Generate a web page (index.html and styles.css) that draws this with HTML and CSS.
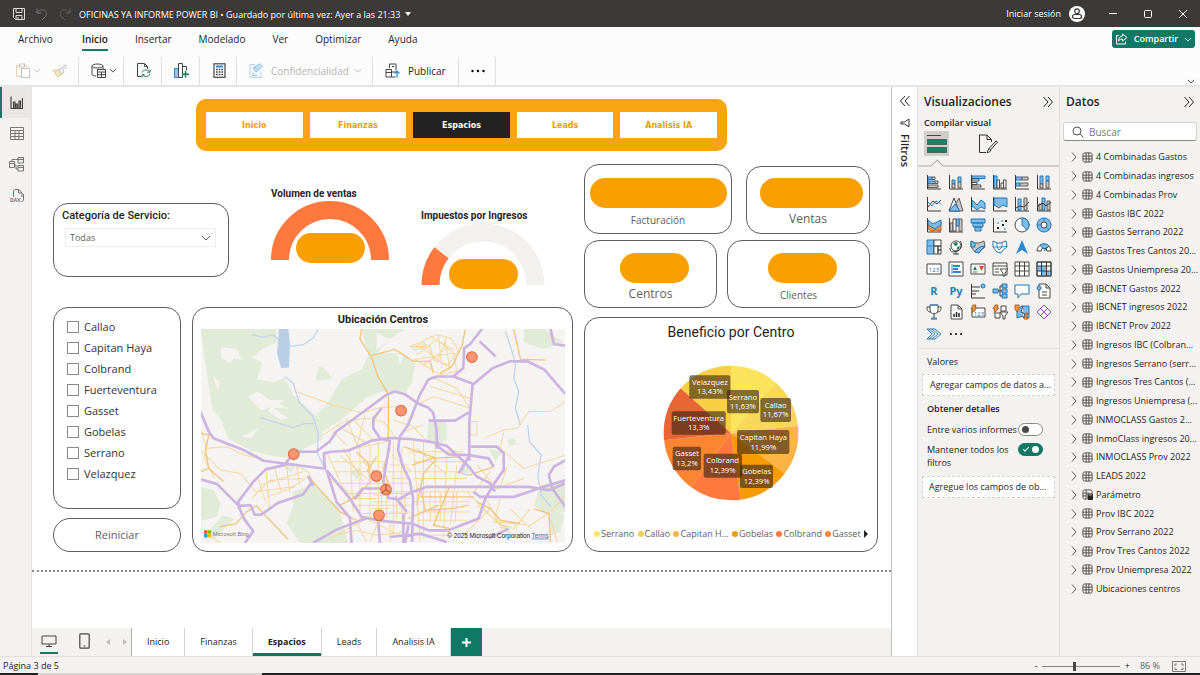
FILE: index.html
```html
<!DOCTYPE html>
<html lang="es">
<head>
<meta charset="utf-8">
<meta name="viewport" content="width=device-width, initial-scale=1">
<title>OFICINAS YA INFORME POWER BI</title>
<link rel="stylesheet" href="styles.css">
</head>
<body>
<svg class="defs" aria-hidden="true">
  <symbol id="chev-down" viewBox="0 0 10 6"><path d="M1 1l4 4 4-4" fill="none" stroke="currentColor"/></symbol>
  <symbol id="chev-right" viewBox="0 0 6 10"><path d="M1 0.5l4 4.500-4 4.500" fill="none" stroke="currentColor"/></symbol>
  <symbol id="dbl-right" viewBox="0 0 12 12"><path d="M1.500 1l4.500 5-4.500 5M6 1l4.500 5L6 11" fill="none" stroke="currentColor"/></symbol>
  <symbol id="dbl-left" viewBox="0 0 12 12"><path d="M6 1L1.500 6 6 11M10.500 1L6 6l4.500 5" fill="none" stroke="currentColor"/></symbol>
  <symbol id="table" viewBox="0 0 12 12"><rect x="1" y="1" width="10" height="10" rx="2" fill="none" stroke="currentColor"/><path d="M1 4.500h10M1 7.500h10M4.500 1v10M7.500 1v10" stroke="currentColor" fill="none"/></symbol>
  <symbol id="table-param" viewBox="0 0 12 12"><path d="M11 5V3a2 2 0 0 0-2-2H3a2 2 0 0 0-2 2v6a2 2 0 0 0 2 2h2M1 4.500h7M1 7.500h4M4.500 1v10" fill="none" stroke="currentColor"/><rect x="6" y="5" width="6" height="7" rx="1" fill="#252423"/><path d="M7 6.500h4" stroke="#fff" stroke-width=".7"/></symbol>
</svg>

<header class="titlebar">
  <button class="tb-btn" aria-label="Guardar"><svg width="14" height="14" viewBox="0 0 14 14"><path d="M1.500 1.500h11v11h-9l-2-2zM4 1.500v4h6v-4M4 12.500v-4h6v4M6 10v2.500" fill="none" stroke="#ddd"/></svg></button>
  <button class="tb-btn" aria-label="Deshacer"><svg width="14" height="14" viewBox="0 0 14 14"><path d="M2 1.500v4.500h4.500M2 6c2-3 5-4 7.500-2.500s2.500 4.500.5 6.500L7 13" fill="none" stroke="#77757a"/></svg></button>
  <button class="tb-btn" aria-label="Rehacer"><svg width="14" height="14" viewBox="0 0 14 14"><path d="M12 1.500v4.500H7.500M12 6C10 3 7 2 4.500 3.500S2 8 4 10l3 3" fill="none" stroke="#65635f"/></svg></button>
  <h1 class="doc-title">OFICINAS YA INFORME POWER BI • Guardado por última vez: Ayer a las 21:33</h1>
  <svg class="caret" width="6" height="4" viewBox="0 0 6 4"><path d="M0 0h6L3 4z" fill="#fff"/></svg>
  <span class="spacer"></span>
  <button class="signin">Iniciar sesión
    <svg width="16" height="16" viewBox="0 0 16 16"><circle cx="8" cy="8" r="8" fill="#fff"/><circle cx="8" cy="5.200" r="2.300" fill="none" stroke="#333" stroke-width="1.200"/><rect x="3.500" y="8.500" width="9" height="4" rx="2" fill="none" stroke="#333" stroke-width="1.200"/></svg></button>
  <button class="win" aria-label="Minimizar"><svg width="10" height="10" viewBox="0 0 10 10"><path d="M1 4.500h8" stroke="#fff"/></svg></button>
  <button class="win" aria-label="Maximizar"><svg width="10" height="10" viewBox="0 0 10 10"><rect x="1.500" y="1.500" width="7" height="7" rx="1" fill="none" stroke="#fff"/></svg></button>
  <button class="win" aria-label="Cerrar"><svg width="10" height="10" viewBox="0 0 10 10"><path d="M1 1l8 8M9 1L1 9" stroke="#fff"/></svg></button>
</header>

<section class="ribbon">
  <nav class="ribbon-tabs">
    <a href="#">Archivo</a><a href="#" class="active">Inicio</a><a href="#">Insertar</a><a href="#">Modelado</a><a href="#">Ver</a><a href="#">Optimizar</a><a href="#">Ayuda</a>
    <button class="share"><svg width="13" height="12" viewBox="0 0 13 12"><path d="M4 2.500H1.500v8.500h9V8.500" fill="none" stroke="#fff"/><path d="M7.500 1l4.500 3.500-4.500 3.500V6C5.500 6 4.500 6.500 3.500 8 3.800 5 5 3.200 7.500 3z" fill="none" stroke="#fff"/></svg>Compartir<svg width="8" height="5"><use href="#chev-down"/></svg></button>
  </nav>
  <div class="tools">
    <div class="tool-group first">
      <button aria-label="Pegar" class="tool off"><svg width="15" height="15" viewBox="0 0 15 15"><path d="M5 2.500H1.500v11H6M10 2.500h2V5" fill="none" stroke="#e6d3a3"/><rect x="4.500" y="1" width="5" height="3" fill="none" stroke="#c5c3c0"/><rect x="6.500" y="5.500" width="8" height="9" fill="#fff" stroke="#c5c3c0"/></svg><svg width="8" height="5"><use href="#chev-down"/></svg></button>
      <button aria-label="Copiar formato" class="tool off"><svg width="15" height="14" viewBox="0 0 15 14"><path d="M1 6l5 7 4-3-3-5-2 1.500z" fill="#f3e5bd" stroke="#dbc68e"/><path d="M6.500 5.500l3.500 4.500 2-2-1.500-2 4-3.500-1.200-1.500-4 3.500z" fill="#f8f8f8" stroke="#c0beba"/></svg></button>
    </div>
    <div class="tool-group menu"><button aria-label="Obtener datos" class="tool"><svg width="15" height="15" viewBox="0 0 15 15"><ellipse cx="6.500" cy="3" rx="5.500" ry="2" fill="none" stroke="#444"/><path d="M1 3v8c0 1.300 1.500 2 4 2M12 3v3" fill="none" stroke="#444"/><path d="M6.500 6.500h8v8h-8zM6.500 9h8M6.500 11.700h8M10.500 9v5.500" fill="#fff" stroke="#444"/></svg><svg width="8" height="5"><use href="#chev-down"/></svg></button></div>
    <div class="tool-group"><button aria-label="Actualizar" class="tool"><svg width="15" height="15" viewBox="0 0 15 15"><path d="M5 13.500H1.500V.5h7l3 3V6M8.500.5v3h3" fill="none" stroke="#444"/><path d="M6 9.500c1-3 5.500-3.500 7.500-.8M14 6.500v2.700h-2.700M14 11c-1 3-5.500 3.300-7.500.8M6 14.500v-2.700h2.700" fill="none" stroke="#15795f"/></svg></button></div>
    <div class="tool-group"><button aria-label="Nuevo objeto visual" class="tool"><svg width="15" height="15" viewBox="0 0 15 15"><path d="M.5 5.500h4v9h-4z" fill="#8ec6f2" stroke="#2b88c9"/><path d="M4.500.5h4v14h-4zM8.500 3.500h4v4" fill="#fff" stroke="#444"/><path d="M11.500 8v6.500M8 11.200h7" stroke="#15795f" stroke-width="1.400"/></svg></button></div>
    <div class="tool-group"><button aria-label="Nueva medida" class="tool"><svg width="13" height="15" viewBox="0 0 13 15"><rect x="1" y=".8" width="11" height="13.500" fill="#fff" stroke="#444" stroke-width="1.200"/><path d="M3 3.500h7" stroke="#2b88c9" stroke-width="2"/><path d="M3 6.500h7M3 9h7M3 11.500h7" stroke="#444" stroke-width="1.500" stroke-dasharray="1.700 1"/></svg></button></div>
    <div class="tool-group"><button class="tool off"><svg width="14" height="15" viewBox="0 0 14 15"><path d="M6 1.500H1v13h11V9" fill="#f4f9fd" stroke="#b9d3e6"/><path d="M4 5l7-4.500 2.500 3-6.500 5.500zM3 12.500h5M3 10.500h2" fill="#cfe6f7" stroke="#8fc0e4"/><path d="M6 4l2.500 3M8 2.500l2.500 3" stroke="#8fc0e4"/></svg><span>Confidencialidad</span><svg width="8" height="5"><use href="#chev-down"/></svg></button></div>
    <div class="tool-group"><button class="tool"><svg width="15" height="15" viewBox="0 0 15 15"><path d="M4.500 5V1h6.500v6.500M6.500 9v5H1V6.500h5.500V9h4" fill="none" stroke="#444"/><path d="M1 9.500h5M7 3.500h2M6.500 14h4" stroke="#444"/><path d="M12 14.500V8M9.500 10.500L12 8l2.500 2.500" fill="none" stroke="#2b88c9" stroke-width="1.200"/></svg><span>Publicar</span></button></div>
    <div class="tool-group"><button aria-label="Más opciones" class="tool"><svg width="14" height="4" viewBox="0 0 14 4"><circle cx="1.500" cy="2" r="1.200"/><circle cx="7" cy="2" r="1.200"/><circle cx="12.500" cy="2" r="1.200"/></svg></button></div>
    <button class="collapse" aria-label="Contraer cinta"><svg width="8" height="5"><use href="#chev-down"/></svg></button>
  </div>
</section>

<main class="workspace">
  <nav class="views">
    <button class="view active" aria-label="Vista de informe"><svg width="13" height="13" viewBox="0 0 13 13"><path d="M1 .5v12h11.500V2M3.500 12V6h1.500v6M6 12V8h1.500v4M9 12V5h1.500v7" fill="none" stroke="#444" stroke-width="1.200"/></svg></button>
    <button class="view" aria-label="Vista de tabla"><svg width="14" height="13" viewBox="0 0 14 13"><path d="M.5.5h13v12H.5zM.5 3.500h13M.5 6.500h13M.5 9.500h13M5 3v9.500M9 3v9.500" fill="none" stroke="#777"/></svg></button>
    <button class="view" aria-label="Vista de modelo"><svg width="15" height="15" viewBox="0 0 15 15"><path d="M.5 4.500h5v6h-5zM.5 6.500h5M9 .5h5.500v5.500H9zM9 2.500h5.500M9 8.500h5.500V14H9zM9 10.500h5.500M3 4.500V2.500h6M5.500 8H7v4h2" fill="none" stroke="#777"/></svg></button>
    <button class="view" aria-label="Vista de consultas DAX"><svg width="14" height="14" viewBox="0 0 14 14"><path d="M3.500 8V3c0-1.500 1-2.500 2.500-2.500h3L12 4v4M8.500.5V4H12M13.500 5v6c0 1-1 1.500-2 1.500" fill="none" stroke="#777"/><text x="0" y="13" class="dax-text">DAX</text></svg></button>
  </nav>

  <section class="report">
    <div class="page">
      <nav class="page-nav"><a href="#">Inicio</a><a href="#">Finanzas</a><a href="#" class="active">Espacios</a><a href="#">Leads</a><a href="#">Analisis IA</a></nav>
      <div class="board">
        <div class="left">
          <div class="upper">
            <div class="card category">
              <label for="cat">Categoría de Servicio:</label>
              <div class="select-wrap"><select id="cat"><option>Todas</option></select><svg width="10" height="6"><use href="#chev-down"/></svg></div>
            </div>
            <figure class="gauge one"><figcaption>Volumen de ventas</figcaption>
              <svg width="118" height="63" viewBox="0 0 118 63"><path d="M9 59a50 50 0 0 1 100 0" fill="none" stroke="#ff793f" stroke-width="18"/><rect x="25" y="32" width="69" height="30" rx="15" fill="#fa9f00"/></svg></figure>
            <figure class="gauge two"><figcaption>Impuestos por Ingresos</figcaption>
              <svg width="124" height="67" viewBox="0 0 124 67"><path d="M9.500 62a52.500 52.500 0 0 1 105 0" fill="none" stroke="#f2f1f0" stroke-width="18"/><path d="M9.500 62a52.500 52.500 0 0 1 105 0" fill="none" stroke="#ff793f" stroke-width="18" pathLength="100" stroke-dasharray="21 100"/><rect x="28" y="36" width="69" height="30" rx="15" fill="#fa9f00"/></svg></figure>
          </div>
          <div class="lower">
            <div class="slicer-col">
              <fieldset class="card slicer">
                <div class="options">
                <label><input type="checkbox">Callao</label><label><input type="checkbox">Capitan Haya</label><label><input type="checkbox">Colbrand</label><label><input type="checkbox">Fuerteventura</label><label><input type="checkbox">Gasset</label><label><input type="checkbox">Gobelas</label><label><input type="checkbox">Serrano</label><label><input type="checkbox">Velazquez</label>
                </div>
              </fieldset>
              <button class="card reset">Reiniciar</button>
            </div>
            <div class="card map-card">
              <h2>Ubicación Centros</h2>
              <svg class="map" viewBox="33 73 1092 640" preserveAspectRatio="xMidYMid slice">
                <rect x="33" y="73" width="1092" height="640" fill="#f6f4f2"/>
                <g fill="#e2ebd8">
                  <path d="M33 73h225l5 40-45 20-30 25 30 15-15 50 50 10 30-15 30 55 45 40 40 40 0 50-60 30-20 28-70-8-60-15-70-35-25-60-25-30z"/>
                  <path d="M515 73h130l-45 30-40 42 70 0 45 30-10 60-20 30-65-5-50 18-80 70-50 30-25-40 40-45 40-70 60-30 20-40z"/>
                  <path d="M310 560l60-22 75 65 30 110H330l-40-60 20-50z"/><path d="M33 545l40 10 20 40-10 40-50 10zM715 350h55v55l-25 12-35-10z"/>
                  <path d="M1050 540l75-20v100l-50 10-45-30zM1075 625h45l-10 55-30 10z"/><path d="M275 480l50-8-20 30zM950 405l22-5 5 18-20 6zM480 500l30-15 10 25-20 12zM810 500l35-20-10 25zM385 185l18 5 25 30-20 5-30 2zM660 130l40-20 15 15-40 15zM895 430l40 10-20 30zM100 630l35 10-60 60H40zM1000 73h60l60 40-60 20-60-20z"/>
                </g>
                <g fill="#f6f4f2"><path d="M95 125l50 10 10 30-20-5-15 15-25-15zM175 275l30-15 35 25 45 0-15 12 30 15-60-5-25 10zM70 215l20 15-5 25zM205 370l-20 30-30-5zM245 305l50 35-20 5-40-25z"/><path d="M560 85l40 20-40 30zM620 145l20 10-10 25z"/></g>
                <g fill="none" stroke="#c3d4ea" stroke-width="4"><path d="M187 90l35 8 25-8 30 20M385 75l-15 25-30 20-40 5M285 215l25 20 20 60 40 40 15 50-2 60 25 50"/><path d="M210 338l40 12 60 18 35-12h30M1012 360l5 50 35 40-10 60 10 60 30 35M945 80l20 60 10 40-5 40 15 40-10 50 15 50M825 480l-10 25 20 5"/></g>
                <path d="M268 73h28l5 45-3 70-24 2-12-45 3-30z" fill="#b9cfe6"/>
                <g fill="none" stroke="#f3d8a2" stroke-width="3">
                  <path d="M325 262l110 40 80 22 50-15 75-5M660 125h60l10 40 45 15 30-45-25-35-40-10zM680 150l60-45 50 40 10 55-50 10-75-45M700 110l40 60M745 90l10 100M770 95l-30 80M670 165l120-20M720 215l80 35 40 60-110-35-40 20M690 125l80 60M720 95l70 40M765 110l15 90M700 180l70-50"/>
                  <path d="M400 390l60-40 70-10 50 10 40 50M470 340l35 90M525 330l-25 100 90-20M580 300l-35 60M610 345l60 20 45 50M650 350l25-20M640 380l60-20M720 245l120 35M860 350v40h-20v-40zM880 400l60-25 40-5 35-50 65 0 45-30M940 380l-10 50 70 60 125-40M430 380l40 40M440 360l100 60M490 345l60 60"/>
                  <path d="M33 370l20 60 60-5 50 25 65 15M33 435l60 60 60 10 50 60M55 400l-10 60 30 60M215 500l95-25 45 25 20 40M205 520l25 75M230 500l5 75 80-30M200 560l110-15 45-30M255 490l20 70M290 480l10 80M185 580l55-55 100-5M240 610l-10-100M320 480l10 60M210 540l130-40"/>
                  <path d="M410 440l60 130 40 50M430 470h160M440 500h220M455 535h200M470 565h180M500 600h160M515 625h140M480 440l10 180M510 430v220M540 420v230M565 410v240M610 410v280M635 430v190M600 560h60M600 580h60M600 600h60M600 620h60M550 570h50M550 590h50M550 610h50M575 560v80M590 560v80M620 560v80M645 560v80M420 520l80 60M460 430l60 100M450 450l80 70M500 580h60M520 470l70 60M605 450l60 50M600 480h55M605 520h50"/>
                  <path d="M670 410l20 300M700 410v290M735 420v220M770 450l-10 250M800 480l-20 180M660 440h160M670 470h150M670 500h150M670 520l160 0M670 560h180M670 590h170M680 620h160M680 645h150M680 430l90 80M720 560v90M750 560v90M800 560l-5 90M830 560l90 90 60 50M860 600l90 70M880 570l60 110M900 610l-80 80M930 580l-20 70 60 20 50-60M860 480l60 70 80-30M900 500l-50 60M960 610l60 60M1080 620l-60 40-100-10M1080 620l45-50M1080 640l20 70M930 545l20-60M33 680l40 20 20 13M440 690l60-15 60 15 80-10M420 700l110-60 120 60M500 650l30 60M560 660l-20 50M600 650v60M670 690h120"/>
                </g>
                <g fill="none" stroke="#f2c47c" stroke-width="4"><path d="M515 73l-5 30 35 55 20 60 30 50v130M545 152l70-18 55 36 50 0 10 35M825 75l-10 50-30 60-35 20M970 73l20 90 75 3"/><path d="M33 385l25 5-10 45 10 55 45 40M33 500l25-10M90 665l50-10 30-35 30-18 95 100M360 520l90 100 50 25M640 425l100 35-40 45-20 95M500 440l35 35 5 55-45 55M665 480l60-20 85-5M690 540l15 75 80-5 50-10M560 455l-30 45M860 590l40 20 30 35 60 10M780 540l-50 120 50 10M1030 610l45 15 5 85M835 510l75-25M690 575h160M450 600l60-30M600 430l-20 60 20 60M655 640l90-40"/></g>
                <g fill="none" stroke="#ccb4e0" stroke-width="8" stroke-linejoin="round">
                  <path d="M33 320l25 60 14 20 90 35 60 32 90 12 95 12M33 522l50 15 65 65 35-2 12 28 20 0 50-35 75-25 25-35M355 512l15 30M148 610l-2-20 45-60 38-38 55-12 30-40h65l40-30 20-30 55-40 95-70 25-10 30 8 40 28 30 12 15 15 10 50 2 58"/>
                  <path d="M148 605l15 35 28 38-25 35M405 490l-3-45 22-5 50-3 70-30 55-8 60 3 60 8 50 12 60 55 30 37 40 20 15 25M410 495l30 95 40 48 5 75M410 495l70 85 35 55 60 12 90 8 50 20 60 0 90-35 20-60 30-50 25-35v-50l-20-20-80 0M735 418l40 30 60 2 60 10 15 25M835 455l-30 50"/>
                  <path d="M875 73l-35 45-18 12-3 60-30 25-50 0-25 10-25 45-35 90-25 35-5 40 15 50 20 40 10 55-3 130M790 215l57 22-10 115v115M847 240l60-50 50-20h55l50 25 65 75M868 110l48 45M715 347h80l40-25M575 310l-25 30 0 30 20 30 30 8-20 120 15 50 30 5 35-20 50-18 120 0 185 0 60 10 60-25M650 620l-35-45M640 625v88M593 550h-75l-25 30M565 650l5 63M370 713l70-40 90-35M850 560l20 15 100 0 90-30 65-20M1080 73l10 45 35 5M1125 465l-35 20-15 25 10 40 40 55M600 695l90-10 80 25M655 660l-10 53M895 700l60-30"/>
                </g>
                <g fill="#fb9470" stroke="#d9683f" stroke-width="3"><circle cx="845" cy="157" r="16"/><circle cx="633" cy="317" r="16"/><circle cx="312" cy="447" r="16"/><circle cx="559" cy="513" r="16"/><circle cx="588" cy="553" r="16"/><circle cx="567" cy="630" r="16"/></g>
                <path d="M588 537v17l-13 9M588 554l13 9" fill="none" stroke="#a34a22" stroke-width="3"/>
                <path d="M44 675h10v10H44z" fill="#f25022"/><path d="M55 675h10v10H55z" fill="#7fba00"/><path d="M44 686h10v10H44z" fill="#00a4ef"/><path d="M55 686h10v10H55z" fill="#ffb900"/>
                <text x="70" y="692" class="map-text bing">Microsoft Bing</text>
                <text x="771" y="697" class="map-text">© 2025 Microsoft Corporation</text>
                <text x="1023" y="697" class="map-text terms">Terms</text>
              </svg>
            </div>
          </div>
        </div>
        <div class="right">
          <div class="kpis"><div class="card kpi fact"><span class="pill"></span><span>Facturación</span></div><div class="card kpi vent"><span class="pill"></span><span>Ventas</span></div></div>
          <div class="kpis second"><div class="card kpi cent"><span class="pill"></span><span>Centros</span></div><div class="card kpi clie"><span class="pill"></span><span>Clientes</span></div></div>
          <div class="card pie-card">
            <h2>Beneficio por Centro</h2>
            <svg class="pie" viewBox="0 0 408 408">
              <g class="slices" transform="rotate(-90 204 204)">
                <circle cx="204" cy="204" r="101" pathLength="100" stroke="#fbe45b" stroke-dasharray="11.700 100"/>
                <circle cx="204" cy="204" r="101" pathLength="100" stroke="#f8d75c" stroke-dasharray="11.700 100" stroke-dashoffset="-11.630"/>
                <circle cx="204" cy="204" r="101" pathLength="100" stroke="#fcb445" stroke-dasharray="12 100" stroke-dashoffset="-23.300"/>
                <circle cx="204" cy="204" r="101" pathLength="100" stroke="#f79b04" stroke-dasharray="12.400 100" stroke-dashoffset="-35.290"/>
                <circle cx="204" cy="204" r="101" pathLength="100" stroke="#ff793f" stroke-dasharray="12.400 100" stroke-dashoffset="-47.680"/>
                <circle cx="204" cy="204" r="101" pathLength="100" stroke="#fc8532" stroke-dasharray="13.200 100" stroke-dashoffset="-60.070"/>
                <circle cx="204" cy="204" r="101" pathLength="100" stroke="#e96536" stroke-dasharray="13.300 100" stroke-dashoffset="-73.270"/>
                <circle cx="204" cy="204" r="101" pathLength="100" stroke="#f8cf45" stroke-dasharray="13.430 100" stroke-dashoffset="-86.570"/>
              </g>
              <g class="tags">
                <rect x="79" y="31" width="123" height="70" rx="6"/><rect x="192" y="75" width="96" height="70" rx="6"/><rect x="292" y="99" width="92" height="72" rx="6"/><rect x="26" y="139" width="162" height="70" rx="6"/><rect x="222" y="195" width="157" height="72" rx="6"/><rect x="29" y="245" width="85" height="71" rx="6"/><rect x="122" y="266" width="115" height="72" rx="6"/><rect x="231" y="299" width="99" height="70" rx="6"/>
              </g>
              <g class="tag-text">
                <text x="141" y="60">Velazquez</text><text x="141" y="88">13,43%</text>
                <text x="240" y="104">Serrano</text><text x="240" y="132">11,63%</text>
                <text x="338" y="128">Callao</text><text x="338" y="157">11,67%</text>
                <text x="107" y="168">Fuerteventura</text><text x="107" y="196">13,3%</text>
                <text x="301" y="225">Capitan Haya</text><text x="301" y="254">11,99%</text>
                <text x="72" y="274">Gasset</text><text x="72" y="302">13,2%</text>
                <text x="179" y="295">Colbrand</text><text x="179" y="323">12,39%</text>
                <text x="281" y="328">Gobelas</text><text x="281" y="356">12,39%</text>
              </g>
            </svg>
            <ul class="legend"><li class="c1">Serrano</li><li class="c2">Callao</li><li class="c3">Capitan H...</li><li class="c4">Gobelas</li><li class="c5">Colbrand</li><li class="c6">Gasset</li><li class="more"><svg width="4" height="8" viewBox="0 0 4 8"><path d="M0 0l4 4-4 4z" fill="#222"/></svg></li></ul>
          </div>
        </div>
      </div>
    </div>
    <nav class="sheets">
      <div class="devices">
        <button class="device active" aria-label="Diseño de escritorio"><svg width="16" height="12" viewBox="0 0 16 12"><path d="M1 1h14v8H1zM5 11.500h6M8 9v2.500" fill="none" stroke="#444"/></svg></button>
        <button class="device phone" aria-label="Diseño móvil"><svg width="11" height="16" viewBox="0 0 11 16"><rect x=".8" y=".8" width="9.400" height="14.400" rx="1" fill="none" stroke="#444" stroke-width="1.200"/><path d="M4.500 13h2" stroke="#444"/></svg></button>
        <button class="arrow" aria-label="Anterior"><svg width="4" height="6" viewBox="0 0 4 6"><path d="M4 0v6L0 3z" fill="#bbb"/></svg></button>
        <button class="arrow" aria-label="Siguiente"><svg width="4" height="6" viewBox="0 0 4 6"><path d="M0 0v6l4-3z" fill="#bbb"/></svg></button>
      </div>
      <a href="#">Inicio</a><a href="#">Finanzas</a><a href="#" class="active">Espacios</a><a href="#">Leads</a><a href="#">Analisis IA</a>
      <button class="add" aria-label="Nueva página"><svg width="9" height="9" viewBox="0 0 9 9"><path d="M4.500 0v9M0 4.500h9" stroke="#fff" stroke-width="2"/></svg></button>
    </nav>
  </section>

  <aside class="filters">
    <button aria-label="Expandir filtros"><svg width="12" height="12"><use href="#dbl-left"/></svg></button>
    <svg width="10" height="10" viewBox="0 0 10 10"><path d="M9 1v8L4.500 6H1V4h3.500z" fill="none" stroke="#333"/></svg>
    <h2>Filtros</h2>
  </aside>

  <aside class="viz">
    <div class="pane-head"><h2>Visualizaciones</h2><button aria-label="Contraer"><svg width="12" height="12"><use href="#dbl-right"/></svg></button></div>
    <h3 class="sub">Compilar visual</h3>
    <div class="modes">
      <button class="mode on" aria-label="Compilar"><svg width="20" height="20" viewBox="0 0 20 20"><path d="M0 1.500h14" stroke="#444"/><path d="M.5 5.500h19v5H.5zM.5 13.500h19v5H.5z" fill="#158265" stroke="#222" stroke-dasharray="1 1"/></svg></button>
      <button class="mode" aria-label="Formato"><svg width="20" height="20" viewBox="0 0 20 20"><path d="M8 18.500H1.500V1H9l4.500 4.500V8M9 1v4.500h4.500M9 18.500l2-4 7-7.500 1.500 1-6.500 7.500c-.5 2.500-2 3-4 3zM11 14.500l2 1.500" fill="none" stroke="#333"/></svg></button>
    </div>
    <svg class="notch" viewBox="0 0 140 8" preserveAspectRatio="none"><path d="M0 7h13l6-6 6 6h115" fill="none" stroke="#aaa"/></svg>
    <div class="icons">
      <svg viewBox="0 0 16 16"><path class="b" d="M2 3h4v2.500H2zM2 7h7v2.500H2z"/><path class="g" d="M6 3h3v2.500H6zM9 7h3v2.500H9zM2 11h10v2.500H2z"/><path class="k" d="M1.500 1v14H15"/></svg>
      <svg viewBox="0 0 16 16"><path class="b" d="M4 6h3v4H4zM10 3h3v5h-3z"/><path class="g" d="M4 10h3v4H4zM10 8h3v6h-3z"/><path class="k" d="M1.500 1v14H15"/></svg>
      <svg viewBox="0 0 16 16"><path class="b" d="M2 2h13v2.500H2z"/><path class="w" d="M2 5h7v2H2zM2 8.500h5v2H2zM2 11h9v2H2z"/><path class="k" d="M1.500 1v14H15"/></svg>
      <svg viewBox="0 0 16 16"><path class="b" d="M2 2h3v12H2z"/><path class="w" d="M5 6h2.500v8H5zM9 9h2.500v5H9zM11.500 6H14v8h-2.500z"/><path class="k" d="M1.500 1v14H15"/></svg>
      <svg viewBox="0 0 16 16"><path class="b" d="M2 3h6v3H2zM2 9h4v3H2z"/><path class="g" d="M8 3h6v3H8zM6 9h8v3H6z"/><path class="k" d="M1.500 1v14H15"/></svg>
      <svg viewBox="0 0 16 16"><path class="b" d="M4 2h3v8H4zM10 2h3v5h-3z"/><path class="g" d="M4 10h3v4H4zM10 7h3v7h-3z"/><path class="k" d="M1.500 1v14H15"/></svg>

      <svg viewBox="0 0 16 16"><path class="k" d="M1.500 1v14H15M2 11l5-6 4 3 4-4"/><path class="l" d="M2 6l4 4 4-5 5 3"/></svg>
      <svg viewBox="0 0 16 16"><path class="g" d="M8 7l3-5 4 13H6z"/><path class="w" d="M1 15L6 2l5 13z"/><path class="b" d="M2 14l5-6 5 7H1z"/></svg>
      <svg viewBox="0 0 16 16"><path class="b" d="M2 4l5 5 4-5 4 3v6l-4-2-4 3-5-4z"/><path class="k" d="M1.500 1v14H15"/></svg>
      <svg viewBox="0 0 16 16"><path class="b" d="M2 2h13v9l-4-2-4 3-5-3z"/><path class="k" d="M1.500 1v14H15"/></svg>
      <svg viewBox="0 0 16 16"><path class="b" d="M4 3h3v11H4z"/><path class="g" d="M10 2h3v12h-3z"/><path class="k" d="M1.500 1v14H15M2 12l4-2 4 1 5-5"/></svg>
      <svg viewBox="0 0 16 16"><path class="b" d="M6 2h3v12H6z"/><path class="g" d="M3 8h3v6H3zM11 5h3v9h-3z"/><path class="k" d="M1.500 1v14H15M2 10l5-3 3 3 5-4"/></svg>

      <svg viewBox="0 0 16 16"><path class="o" d="M2 6l5 5 8-6v9l-5-1-4 1-4-2z"/><path class="b" d="M2 3l5 4 8-4v5l-6 4-7-4z"/><path class="k" d="M1.500 1v14H15"/></svg>
      <svg viewBox="0 0 16 16"><path class="g" d="M2 6h3v8H2zM11 2h3v12h-3z"/><path class="b" d="M8 2h3v7H8z"/><path class="w" d="M5 2h3v12H5z"/><path class="k" d="M1.500 1v14H15"/></svg>
      <svg viewBox="0 0 16 16"><path class="b" d="M1 2h14v4H1zM3 6h10v4H3zM5 10h6v4H5z"/></svg>
      <svg viewBox="0 0 16 16"><path class="k" d="M1.500 1v14H15"/><path d="M5 10h2v2H5zM10 7h2v2h-2zM13 3h2v2h-2z" fill="#222"/><path d="M5 5h2v2H5zM9 3h2v2H9zM12 11h2v2h-2z" fill="#7cbcec"/></svg>
      <svg viewBox="0 0 16 16"><circle cx="8" cy="8" r="7" class="w"/><path class="b" d="M8 1a7 7 0 0 1 5 12L8 8z"/></svg>
      <svg viewBox="0 0 16 16"><circle cx="8" cy="8" r="7" class="b"/><circle cx="8" cy="8" r="3" class="w"/><path class="l" d="M8 1v4M1 8h4M10 10l3 3"/></svg>

      <svg viewBox="0 0 16 16"><path class="b" d="M1 1h7v14H1z"/><path class="w" d="M8 1h7v6H8zM8 7h4v8H8zM12 7h3v4h-3zM12 11h3v4h-3z"/><path class="l" d="M1 7h7"/></svg>
      <svg viewBox="0 0 16 16"><circle cx="8" cy="7" r="5" class="w"/><path d="M5 4l4-1 1 3-3 1zM9 8l3-1-1 3-2 1z" fill="#1c7f62"/><path class="k" d="M12 2c3 3 2 9-4 10.500S2 11 2 9M8 12v3M5 15h6"/></svg>
      <svg viewBox="0 0 16 16"><path class="g" d="M1 2l4 2h4l5-2 1 6-4 3-2 3-4-1-4-5z"/><path class="b" d="M1 2l4 2v4H1zM10 8l5-1-4 4-2 3-4-1 2-3z"/></svg>
      <svg viewBox="0 0 16 16"><path class="w blue" d="M1 2l4 2h4l5-2 1 6-4 3-2 3-4-1-4-5z"/><path class="l" d="M1 8h4l5 0 5-1M5 4v4l2 3 3-3V4"/></svg>
      <svg viewBox="0 0 16 16"><path d="M8 1l6 14-6-4-6 4z" fill="#2b88d0"/></svg>
      <svg viewBox="0 0 16 16"><path class="w" d="M1 12a7 7 0 0 1 14 0h-4a3 3 0 0 0-6 0z"/><path class="b" d="M4 6a7 7 0 0 1 9 1l-3 3-3-1z"/><path class="k" d="M8 12l3-4"/></svg>

      <svg viewBox="0 0 16 16"><path class="w" d="M1 3h14v10H1z"/><text x="8" y="11" class="num">123</text></svg>
      <svg viewBox="0 0 16 16"><path class="w" d="M1 1h14v14H1z"/><path d="M4 3v10" class="l"/><path d="M5 5h7M5 8h5M5 11h8" stroke="#2b88c9" stroke-width="2"/></svg>
      <svg viewBox="0 0 16 16"><path class="w" d="M1 3h14v10H1z"/><path d="M3 9l2-4 2 4z" fill="#1c7f62"/><path d="M9 5h5l-2.500 5z" fill="#d5492d"/><path class="g" d="M3 11h4"/></svg>
      <svg viewBox="0 0 16 16"><path class="w" d="M1 2h14v12H1zM1 5h14M3 8h4M3 11h4"/><path class="w" d="M8 8h8l-3 4v3h-2v-3z"/></svg>
      <svg viewBox="0 0 16 16"><path class="w" d="M1 1h14v14H1zM1 5h14M1 10h14M5.500 1v14M10.500 1v14"/></svg>
      <svg viewBox="0 0 16 16"><path class="w" d="M1 1h14v14H1z"/><path d="M1 5h10v5H1zM6 10h9v5H6z" fill="#7cbcec"/><path class="k" d="M1 1h14v14H1zM1 5h14M1 10h14M5.500 1v14M10.500 1v14"/></svg>

      <svg viewBox="0 0 16 16"><text x="8" y="12" class="letter">R</text></svg>
      <svg viewBox="0 0 16 16"><text x="8" y="12" class="letter">Py</text></svg>
      <svg viewBox="0 0 16 16"><path class="k" d="M1.500 1v14H15M2 4h8M2 8h7M2 11h4"/><circle cx="13" cy="3" r="2" class="b"/></svg>
      <svg viewBox="0 0 16 16"><path class="b" d="M1 6h5v4H1zM10 1h5v4h-5zM10 6h5v4h-5zM10 11h5v4h-5z"/><path class="k" d="M6 8h4M8 3v10M8 3h2M8 13h2"/></svg>
      <svg viewBox="0 0 16 16"><path class="w blue" d="M1 2h14v9H7l-3 4v-4H1z"/></svg>
      <svg viewBox="0 0 16 16"><path class="w" d="M3 1h7l4 4v10H3zM10 1v4h4M6 9h5M6 12h5"/><circle cx="3" cy="5" r="2" class="b"/></svg>

      <svg viewBox="0 0 16 16"><path class="w" d="M4 1h8v5c0 5-8 5-8 0zM4 3H1c0 4 1 5 4 5M12 3h3c0 4-1 5-4 5M8 10v4M5 15h6"/><path class="l" d="M4 1h8M5 14h6"/></svg>
      <svg viewBox="0 0 16 16"><path class="w" d="M3 1h7l4 4v10H3zM10 1v4h4"/><path d="M6 13v-3M8.500 13V8M11 13V9" stroke="#222" stroke-width="1.500"/></svg>
      <svg viewBox="0 0 16 16"><path class="w" d="M2 4h13v9H2z"/><text x="9" y="12" class="num">123</text><path class="o" d="M3 1h3L5 4h2l-5 5 1-4H1z"/></svg>
      <svg viewBox="0 0 16 16"><path class="w" d="M9 2h5v5H9zM3 9h5v5H3z"/><path class="w" d="M8 8h8l-3 4v3h-2v-3z"/><path class="o" d="M3 1h3L5 4h2l-5 5 1-4H1z"/></svg>
      <svg viewBox="0 0 16 16"><path class="b" d="M3 5l5-3 7 0v12l-6-2-6 2z"/><path class="w" d="M9 2l-2 6 4 2-2 4"/><path class="o" d="M1 1h4v4L3 8 1 5zM12 9h2v2h-2zM10 13h4v2h-4z"/></svg>
      <svg viewBox="0 0 16 16"><path class="p" d="M8 1l7 7-7 7-7-7zM4.500 4.500l7 7M11.500 4.500l-7 7"/></svg>

      <svg viewBox="0 0 16 16"><path class="w blue" d="M1 3h8l6 5-6 5H1l5-5zM3 3l6 5-6 5M6 3l6 5-6 5"/></svg>
      <svg viewBox="0 0 16 16"><circle cx="3" cy="8" r="1"/><circle cx="8" cy="8" r="1"/><circle cx="13" cy="8" r="1"/></svg>
    </div>
    <div class="wells">
      <h3>Valores</h3>
      <div class="well indent">Agregar campos de datos a...</div>
      <h3 class="strong">Obtener detalles</h3>
      <label class="switch-row">Entre varios informes<input type="checkbox" class="switch"></label>
      <label class="switch-row">Mantener todos los filtros<input type="checkbox" class="switch" checked></label>
      <div class="well">Agregue los campos de ob...</div>
    </div>
  </aside>

  <aside class="data">
    <div class="pane-head"><h2>Datos</h2><button aria-label="Contraer"><svg width="12" height="12"><use href="#dbl-right"/></svg></button></div>
    <label class="search"><svg width="12" height="12" viewBox="0 0 12 12"><circle cx="5" cy="5" r="4" fill="none" stroke="#555"/><path d="M8 8l3.500 3.500" stroke="#555"/></svg><input type="text" placeholder="Buscar" aria-label="Buscar"></label>
    <ul class="tables">
      <li><svg class="ar"><use href="#chev-right"/></svg><svg class="ti"><use href="#table"/></svg>4 Combinadas Gastos</li>
      <li><svg class="ar"><use href="#chev-right"/></svg><svg class="ti"><use href="#table"/></svg>4 Combinadas ingresos</li>
      <li><svg class="ar"><use href="#chev-right"/></svg><svg class="ti"><use href="#table"/></svg>4 Combinadas Prov</li>
      <li><svg class="ar"><use href="#chev-right"/></svg><svg class="ti"><use href="#table"/></svg>Gastos IBC 2022</li>
      <li><svg class="ar"><use href="#chev-right"/></svg><svg class="ti"><use href="#table"/></svg>Gastos Serrano 2022</li>
      <li><svg class="ar"><use href="#chev-right"/></svg><svg class="ti"><use href="#table"/></svg>Gastos Tres Cantos 20...</li>
      <li><svg class="ar"><use href="#chev-right"/></svg><svg class="ti"><use href="#table"/></svg>Gastos Uniempresa 20...</li>
      <li><svg class="ar"><use href="#chev-right"/></svg><svg class="ti"><use href="#table"/></svg>IBCNET Gastos 2022</li>
      <li><svg class="ar"><use href="#chev-right"/></svg><svg class="ti"><use href="#table"/></svg>IBCNET ingresos 2022</li>
      <li><svg class="ar"><use href="#chev-right"/></svg><svg class="ti"><use href="#table"/></svg>IBCNET Prov 2022</li>
      <li><svg class="ar"><use href="#chev-right"/></svg><svg class="ti"><use href="#table"/></svg>Ingresos IBC (Colbran...</li>
      <li><svg class="ar"><use href="#chev-right"/></svg><svg class="ti"><use href="#table"/></svg>Ingresos Serrano (serr...</li>
      <li><svg class="ar"><use href="#chev-right"/></svg><svg class="ti"><use href="#table"/></svg>Ingresos Tres Cantos (...</li>
      <li><svg class="ar"><use href="#chev-right"/></svg><svg class="ti"><use href="#table"/></svg>Ingresos Uniempresa (...</li>
      <li><svg class="ar"><use href="#chev-right"/></svg><svg class="ti"><use href="#table"/></svg>INMOCLASS Gastos 2...</li>
      <li><svg class="ar"><use href="#chev-right"/></svg><svg class="ti"><use href="#table"/></svg>InmoClass ingresos 20...</li>
      <li><svg class="ar"><use href="#chev-right"/></svg><svg class="ti"><use href="#table"/></svg>INMOCLASS Prov 2022</li>
      <li><svg class="ar"><use href="#chev-right"/></svg><svg class="ti"><use href="#table"/></svg>LEADS 2022</li>
      <li><svg class="ar"><use href="#chev-right"/></svg><svg class="ti"><use href="#table-param"/></svg>Parámetro</li>
      <li><svg class="ar"><use href="#chev-right"/></svg><svg class="ti"><use href="#table"/></svg>Prov IBC 2022</li>
      <li><svg class="ar"><use href="#chev-right"/></svg><svg class="ti"><use href="#table"/></svg>Prov Serrano 2022</li>
      <li><svg class="ar"><use href="#chev-right"/></svg><svg class="ti"><use href="#table"/></svg>Prov Tres Cantos 2022</li>
      <li><svg class="ar"><use href="#chev-right"/></svg><svg class="ti"><use href="#table"/></svg>Prov Uniempresa 2022</li>
      <li><svg class="ar"><use href="#chev-right"/></svg><svg class="ti"><use href="#table"/></svg>Ubicaciones centros</li>
    </ul>
  </aside>
</main>

<footer class="status">
  <span>Página 3 de 5</span>
  <span class="spacer"></span>
  <button aria-label="Alejar">-</button>
  <input class="zoom" type="range" min="10" max="190" value="86" aria-label="Zoom">
  <button aria-label="Acercar">+</button>
  <span class="pct">86 %</span>
  <button class="fit" aria-label="Ajustar a la página"><svg width="14" height="11" viewBox="0 0 14 11"><path d="M.5.5h13v10H.5z" fill="none" stroke="#777"/><path d="M3 5V3h2M9 3h2v2M11 6.500v2H9M5 8.500H3v-2" fill="none" stroke="#777"/></svg></button>
</footer>
<div class="edge"></div>
</body>
</html>
```
FILE: styles.css
```css
* { box-sizing: border-box; }
body {
  margin: 0;
  min-height: 100vh;
  display: flex;
  flex-direction: column;
  font-family: "Open Sans", "Noto Sans", sans-serif;
  font-size: 10px;
  line-height: 14px;
  color: #252423;
  background: #f3f2f1;
}
button { font: inherit; color: inherit; background: none; border: 0; padding: 0; display: inline-flex; align-items: center; justify-content: center; }
a { color: inherit; text-decoration: none; }
h1, h2, h3, ul, figure { margin: 0; padding: 0; font-size: inherit; list-style: none; }
svg { display: block; flex: none; }
.defs { position: absolute; width: 0; height: 0; }
.spacer { flex: 1; }

/* title bar */
.titlebar { display: flex; align-items: center; height: 27px; padding: 1px 12px 0; background: #3b3a38; color: #fff; }
.tb-btn { margin-right: 9px; }
.tb-btn:nth-child(3) { margin-right: 7px; }
.doc-title { font-weight: 400; font-size: 9px; line-height: 16px; padding-top: 2px; white-space: nowrap; }
.caret { margin-left: 5px; }
.signin { gap: 8px; font-size: 9px; margin-right: 23px; }
.win { width: 10px; margin-left: 25px; }
.signin + .win { margin-left: 0; }

/* ribbon */
.ribbon { height: 60px; background: #fcfcfc; border-bottom: 2px solid #e6e5e4; }
.ribbon-tabs { display: flex; align-items: center; gap: 27px; height: 24px; padding: 0 5px 0 18px; }
.ribbon-tabs a { line-height: 20px; padding-top: 1px; border-bottom: 2px solid transparent; }
.ribbon-tabs .active { margin-left: 2px; font-weight: 600; border-color: #117865; }
.share { margin-left: auto; gap: 6px; width: 83px; height: 18px; border-radius: 3px; background: #117865; color: #fff; font-size: 9px; font-weight: 600; }
.tools { display: flex; align-items: center; height: 34px; padding: 5px 5px 0 0; }
.tool-group { display: flex; align-items: center; height: 28px; padding: 0 10px 0 12px; border-right: 1px solid #e1dfdd; }
.tool-group.first { width: 79px; padding: 0 11px 0 15px; justify-content: space-between; }
.tool-group.menu { padding: 0 6px 0 12px; }
.tool { gap: 3px; min-width: 14px; }
.tool.off { color: #b8b6b4; }
.tool span { margin: 0 2px 0 5px; }
.collapse { margin-left: auto; align-self: flex-end; padding-bottom: 1px; }

/* workspace */
.workspace { flex: 1; display: flex; }
.views { width: 32px; border-right: 1px solid #e6e4e2; }
.view { width: 100%; height: 31px; border-left: 2px solid transparent; }
.view.active { border-color: #117865; background: #e8e7e6; }
.dax-text { font: 700 5px "Open Sans", sans-serif; fill: #777; }
.report { flex: 1; min-width: 0; display: flex; flex-direction: column; background: #fff; }
.page { padding: 12px 13px 18px; border-bottom: 2px dotted #8a8886; }
.page-nav { display: grid; grid-template-columns: repeat(5, 1fr); gap: 7px; width: 62%; min-width: 531px; height: 52px; margin: 0 auto; padding: 13px 10px; border-radius: 10px; background: #f9a410; }
.page-nav a { display: grid; place-items: center; background: #fff; color: #f39a0b; font: 700 8px "DejaVu Sans", sans-serif; }
.page-nav .active { background: #222; color: #fff; }
.board { display: grid; grid-template-columns: 520fr 294fr; gap: 11px; margin-left: 8px; }
.card { border: 1px solid #605e5c; border-radius: 15px; background: #fff; }
.upper { display: flex; align-items: flex-start; height: 156px; }
.category { width: 176px; height: 74px; margin: 52px 42px 0 0; padding: 4px 12px 0 8px; font: 500 11px/16px Roboto, sans-serif; }
.select-wrap { display: grid; align-items: center; margin: 4px 0 0 3px; border: 1px solid #eeedec; }
.select-wrap > * { grid-area: 1 / 1; }
.select-wrap select { appearance: none; width: 100%; height: 17px; padding: 0 4px; border: 0; background: none; font: 9px "Open Sans", sans-serif; color: #605e5c; }
.select-wrap svg { justify-self: end; margin-right: 4px; color: #605e5c; }
.gauge figcaption { font: 700 10px/14px Roboto, sans-serif; white-space: nowrap; }
.gauge.one { width: 118px; margin: 36px 32px 0 0; }
.gauge.two { width: 124px; margin-top: 58px; }
.lower { display: grid; grid-template-columns: 128fr 381fr; gap: 11px; }
.slicer-col { display: flex; flex-direction: column; gap: 9px; }
.slicer { flex: 1; margin: 0; padding: 9px 13px; min-width: 0; }
.options { display: grid; grid-auto-rows: 1fr; height: 167px; }
.slicer label { display: flex; align-items: center; gap: 5px; font-size: 11px; color: #333; }
.slicer input { appearance: none; width: 12px; height: 12px; margin: 0; border: 1px solid #8a8886; }
.reset { height: 34px; color: #605e5c; font-size: 11px; border-radius: 17px; }
.map-card { height: 245px; padding: 4px 7px 8px 8px; display: flex; flex-direction: column; }
.map-card h2 { font: 700 11px/16px Roboto, sans-serif; text-align: center; }
.map { width: 100%; flex: 1; min-height: 0; margin-top: 1px; }
.map-text { font: 19px "Liberation Sans", sans-serif; fill: #222; }
.map-text.bing { fill: #777; font-size: 17px; }
.map-text.terms { fill: #3a6fb5; text-decoration: underline; }
.right { padding-top: 13px; }
.kpis { display: grid; grid-template-columns: 148fr 124fr; gap: 14px; align-items: end; padding-right: 8px; }
.kpis.second { grid-template-columns: 133fr 143fr; gap: 10px; margin: 6px 0 9px; }
.kpi { height: 68px; padding-top: 12px; text-align: center; color: #605e5c; font-size: 12px; line-height: 22px; }
.fact { height: 70px; padding-top: 13px; }
.pill { display: block; width: 69px; height: 30px; margin: 0 auto; border-radius: 15px; background: #fa9f00; }
.vent { padding-top: 11px; }
.fact .pill { width: auto; margin: 0 4px 0 5px; }
.vent .pill { width: auto; margin: 0 6px 0 13px; }
.fact, .clie { font-size: 10px; line-height: 24px; }
.clie .pill { margin-left: 40px; }
.cent .pill { margin-left: 35px; }
.pie-card { height: 235px; padding: 4px 9px; display: flex; flex-direction: column; align-items: center; }
.pie-card h2 { font: 400 14px/20px Roboto, sans-serif; }
.pie { width: 136px; height: 136px; margin: 23px 0 26px; }
.slices circle { fill: none; stroke-width: 202; }
.tags rect { fill: #332211; fill-opacity: .6; }
.tag-text text { font: 23px "Open Sans", sans-serif; fill: #fff; text-anchor: middle; }
.legend { display: flex; align-items: center; justify-content: space-between; width: 100%; font-size: 9px; color: #605e5c; white-space: nowrap; }
.legend li { display: flex; align-items: center; gap: 1px; }
.legend li::before { content: ""; width: 6px; height: 6px; border-radius: 50%; background: currentColor; }
.legend .more::before { display: none; }
.legend .c1::before { background: #fbe45b; }
.legend .c2::before { background: #f3cf55; }
.legend .c3::before { background: #fcb445; }
.legend .c4::before { background: #ef9a07; }
.legend .c5::before { background: #ff793f; }
.legend .c6::before { background: #fc8532; }

/* page tabs */
.sheets { display: flex; height: 28px; margin-top: auto; background: #f3f2f1; }
.devices { display: flex; align-items: center; width: 100px; padding-left: 8px; border-right: 1px solid #b3b0ad; }
.device { flex: none; height: 24px; width: 18px; border-bottom: 2px solid transparent; }
.device.active { border-color: #117865; }
.phone { margin: 0 13px 0 17px; }
.arrow + .arrow { margin-left: 13px; }
.sheets a { padding: 0 15px; line-height: 28px; font-size: 9px; background: #fff; border-right: 1px solid #d8d6d4; white-space: nowrap; }
.sheets a.active { font-weight: 700; box-shadow: inset 0 -3px #1b6f5b; }
.add { width: 31px; background: #117865; }

/* side panes */
.filters { width: 27px; display: flex; flex-direction: column; align-items: center; padding-top: 8px; background: #fff; border-left: 1px solid #c8c6c4; border-right: 1px solid #e1dfdd; }
.filters > svg { margin: 11px 0 6px; }
.filters h2 { writing-mode: vertical-rl; font-size: 11px; font-weight: 600; line-height: 16px; }
.viz { width: 141px; }
.pane-head { display: flex; justify-content: space-between; align-items: center; height: 30px; padding: 0 5px 0 6px; }
.pane-head h2 { font-size: 12px; font-weight: 600; }
.sub { margin: -1px 0 0 6px; font-size: 9px; font-weight: 600; }
.modes { display: flex; gap: 26px; padding: 1px 6px; }
.mode { width: 25px; height: 25px; }
.mode.on { background: #d0cecc; }
.notch { width: 100%; height: 8px; margin-top: 2px; }
.icons { display: grid; grid-template-columns: repeat(6, 1fr); height: 177px; margin: 4px 4px 0 5px; padding-bottom: 3px; place-items: center; }
.icons svg { width: 16px; height: 16px; }
.icons .b { fill: #7cbcec; stroke: #2475ae; }
.icons .g { fill: #c8c6c4; stroke: #605e5c; }
.icons .w { fill: #fff; stroke: #484644; }
.icons .w.blue { stroke: #2475ae; }
.icons .k { fill: none; stroke: #3b3a39; }
.icons .l { fill: none; stroke: #2b88c9; }
.icons .o { fill: #e89a4a; stroke: #b8601c; }
.icons .p { fill: none; stroke: #8e4db0; }
.icons .num { font: 6px "Open Sans", sans-serif; fill: #2475ae; text-anchor: middle; }
.icons .letter { font: 700 11px "Open Sans", sans-serif; fill: #2b7cc0; text-anchor: middle; }
.wells { padding: 6px 4px 0; border-top: 1px solid #e1dfdd; font-size: 9px; }
.wells h3 { margin-left: 5px; font-weight: 400; }
.wells .strong { font-weight: 600; margin-top: 6px; margin-bottom: 7px; }
.well { height: 22px; margin-top: 5px; padding-left: 6px; line-height: 20px; background: #fff; border: 1px dashed #d2d0ce; white-space: nowrap; overflow: hidden; }
.well.indent { padding-left: 7px; }
.switch-row { display: flex; justify-content: space-between; align-items: flex-start; padding: 0 12px 0 5px; margin-bottom: 7px; line-height: 13px; }
.switch { appearance: none; flex: none; display: flex; align-items: center; justify-content: space-between; width: 25px; height: 13px; margin: 0; padding: 0 3px; border: 1px solid #8a8886; border-radius: 7px; background: #fff; }
.switch::before { content: ""; width: 7px; height: 7px; border-radius: 50%; background: #484644; }
.switch:checked { background: #117865; border-color: #117865; }
.switch:checked::before { width: 6px; height: 3px; margin: 0 0 2px 1px; box-sizing: border-box; border: solid #fff; border-width: 0 0 1px 1px; border-radius: 0; background: none; transform: rotate(-45deg); }
.switch:checked::after { content: ""; width: 7px; height: 7px; border-radius: 50%; background: #fff; }
.data { width: 141px; border-left: 1px solid #e1dfdd; }
.search { display: flex; align-items: center; gap: 5px; height: 19px; margin: 5px 3px 7px; padding: 0 8px; background: #fff; border: 1px solid #d2d0ce; border-bottom-color: #8a8886; border-radius: 3px; }
.search input { width: 100%; min-width: 0; padding: 0; border: 0; outline: 0; background: none; font: 10px "Open Sans", sans-serif; }
.tables { display: grid; grid-auto-rows: 1fr; height: 450px; padding-left: 11px; font-size: 9px; }
.tables li { display: flex; align-items: center; white-space: nowrap; }
.ar { width: 6px; height: 10px; margin-right: 5px; color: #605e5c; }
.ti { width: 11px; height: 11px; margin-right: 3px; color: #484644; }

/* status bar */
.status { display: flex; align-items: center; height: 17px; padding: 2px 14px 0 3px; border-top: 1px solid #e1dfdd; font-size: 9px; }
.zoom { appearance: none; width: 78px; height: 10px; margin: 0 5px 0 4px; background: linear-gradient(#8a8886, #8a8886) center / 100% 1px no-repeat; }
.zoom::-webkit-slider-thumb { appearance: none; width: 3px; height: 9px; background: #484644; }
.pct { margin: 0 12px 0 10px; color: #605e5c; }
.edge { height: 2px; background: linear-gradient(90deg, #222 38px, #d8d6d4 38px 262px, #222 262px); }
```
